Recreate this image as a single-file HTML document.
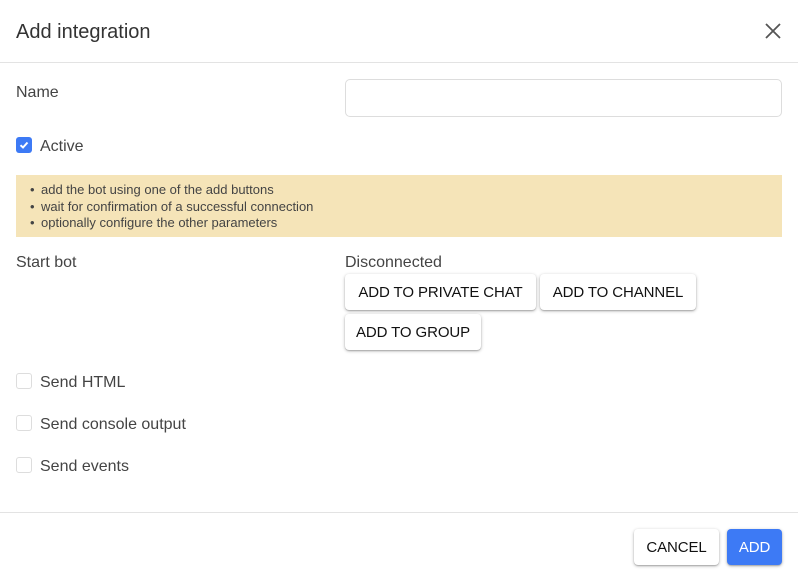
<!DOCTYPE html>
<html><head><style>
*{box-sizing:border-box;margin:0;padding:0}
body{width:798px;height:581px;background:#fff;font-family:"Liberation Sans",sans-serif;color:#444;position:relative;overflow:hidden}
.a{position:absolute}
.t{font-size:16px;color:#444}
.btn{position:absolute;height:36px;background:#fff;border-radius:4px;box-shadow:0 1px 3px rgba(0,0,0,.3),0 1px 1px rgba(0,0,0,.15);font-size:15px;color:#111;display:flex;align-items:center;justify-content:center;letter-spacing:-0.1px}
.cb{position:absolute;width:16px;height:16px;border:1px solid #ddd;border-radius:3px;background:#fff}
</style></head><body>
<div class="a" style="left:16px;top:21px;font-size:20px;color:#333">Add integration</div>
<svg class="a" style="left:764px;top:22px" width="18" height="18"><path d="M2 2L16 16M16 2L2 16" stroke="#555" stroke-width="1.8"/></svg>
<div class="a" style="left:0;top:62px;width:798px;height:1px;background:#e3e3e3"></div>
<div class="a t" style="left:16px;top:84px">Name</div>
<div class="a" style="left:345px;top:79px;width:437px;height:38px;border:1px solid #ddd;border-radius:5px"></div>
<div class="a" style="left:16px;top:137px;width:16px;height:16px;background:#3d7af5;border-radius:3px"></div>
<svg class="a" style="left:16px;top:137px" width="16" height="16"><path d="M4.5 8.2L7 10.5L11.5 5.5" stroke="#fff" stroke-width="2" fill="none"/></svg>
<div class="a t" style="left:40px;top:138px">Active</div>
<div class="a" style="left:16px;top:175px;width:766px;height:62px;background:#f5e4b8"></div>
<ul class="a" style="left:41px;top:182px;font-size:13px;color:#444;line-height:16.5px;list-style:none">
<li>add the bot using one of the add buttons</li><li>wait for confirmation of a successful connection</li><li>optionally configure the other parameters</li></ul>
<div class="a" style="left:30px;top:182px;font-size:13px;line-height:16.5px;color:#444">•<br>•<br>•</div>
<div class="a t" style="left:16px;top:254px">Start bot</div>
<div class="a t" style="left:345px;top:254px">Disconnected</div>
<div class="btn" style="left:345px;top:274px;width:191px">ADD TO PRIVATE CHAT</div>
<div class="btn" style="left:540px;top:274px;width:156px">ADD TO CHANNEL</div>
<div class="btn" style="left:345px;top:314px;width:136px">ADD TO GROUP</div>
<div class="cb" style="left:16px;top:373px"></div><div class="a t" style="left:40px;top:374px">Send HTML</div>
<div class="cb" style="left:16px;top:415px"></div><div class="a t" style="left:40px;top:416px">Send console output</div>
<div class="cb" style="left:16px;top:457px"></div><div class="a t" style="left:40px;top:458px">Send events</div>
<div class="a" style="left:0;top:512px;width:798px;height:1px;background:#e3e3e3"></div>
<div class="btn" style="left:634px;top:529px;width:85px">CANCEL</div>
<div class="btn" style="left:727px;top:529px;width:55px;background:#3d7af5;color:#fff">ADD</div>
</body></html>
